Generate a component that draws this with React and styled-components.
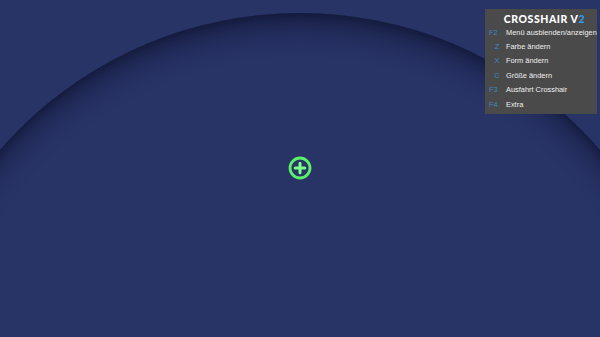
import React from "react";
import styled, { createGlobalStyle } from "styled-components";

const Global = createGlobalStyle`
  html, body { margin: 0; padding: 0; }
  body { background: #283366; overflow: hidden; }
`;

const Stage = styled.div`
  position: relative;
  width: 600px;
  height: 337px;
  background: #283366;
  overflow: hidden;
  font-family: "Liberation Sans", Arial, sans-serif;
`;

const Dome = styled.div`
  position: absolute;
  left: -97px;
  top: 13px;
  width: 794px;
  height: 794px;
  border-radius: 50%;
  background: #283366;
  box-shadow: inset 0 14px 24px rgba(8, 12, 35, 0.5), inset 0 3px 6px rgba(8, 12, 35, 0.3);
`;

const Crosshair = styled.svg`
  position: absolute;
  left: 288px;
  top: 156px;
  width: 24px;
  height: 24px;
`;

const Menu = styled.div`
  position: absolute;
  top: 9px;
  right: 3px;
  width: 112px;
  height: 105px;
  box-sizing: border-box;
  background: #4a4a4a;
  padding: 4px 0 0 3px;
  display: flex;
  flex-direction: column;
`;

const Title = styled.div`
  font-family: "Lato", "Liberation Sans", sans-serif;
  font-weight: 900;
  font-size: 10.5px;
  letter-spacing: 0.55px;
  color: #ffffff;
  text-align: center;
  padding-left: 4px;
  line-height: 12px;
`;

const Accent = styled.span`
  color: #2f9be8;
`;

const Row = styled.div`
  display: flex;
  align-items: center;
  height: 14.4px;
  font-size: 7.4px;
  color: #f0f0f0;
`;

const Key = styled.span`
  width: 18px;
  color: #3a86c8;
  text-align: ${(p) => (p.$single ? "center" : "left")};
  padding-left: ${(p) => (p.$single ? "0" : "1px")};
  box-sizing: border-box;
`;

const Label = styled.span`
  white-space: nowrap;
`;

const items = [
  ["F2", "Menü ausblenden/anzeigen"],
  ["Z", "Farbe ändern"],
  ["X", "Form ändern"],
  ["C", "Größe ändern"],
  ["F3", "Ausfahrt Crosshair"],
  ["F4", "Extra"],
];

export default function App() {
  return (
    <Stage>
      <Global />
      <Dome />
      <Crosshair viewBox="0 0 24 24">
        <circle cx="12" cy="12" r="10" fill="none" stroke="#5cf06a" strokeWidth="2.8" />
        <path d="M12 7.2v9.6M7.2 12h9.6" stroke="#7dff86" strokeWidth="3" strokeLinecap="round" />
      </Crosshair>
      <Menu>
        <Title>
          CROSSHAIR V<Accent>2</Accent>
        </Title>
        {items.map(([k, l]) => (
          <Row key={k}>
            <Key $single={k.length === 1}>{k}</Key>
            <Label>{l}</Label>
          </Row>
        ))}
      </Menu>
    </Stage>
  );
}
